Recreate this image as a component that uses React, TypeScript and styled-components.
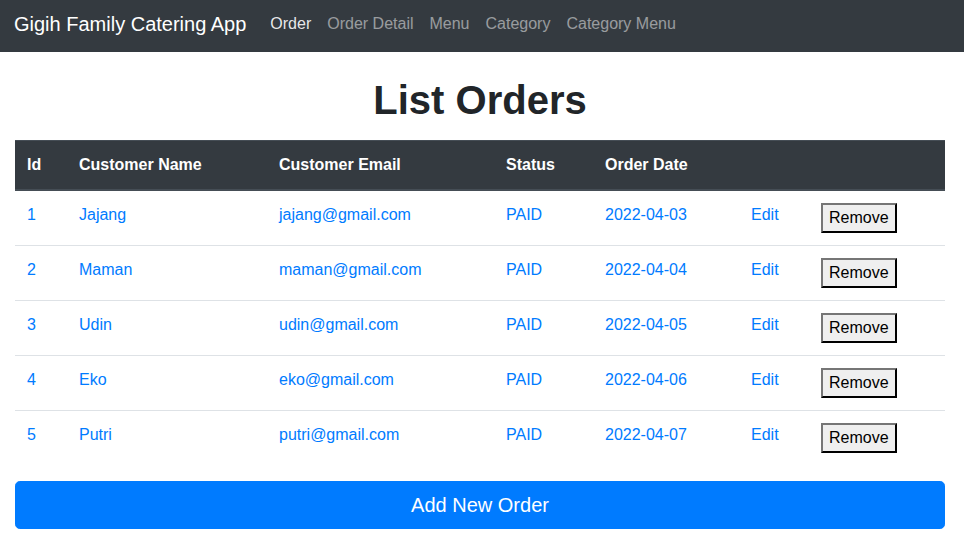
import React from "react";
import styled, { createGlobalStyle } from "styled-components";

const GlobalStyle = createGlobalStyle`
  html, body { margin: 0; padding: 0; background: #fff; }
  body {
    font-family: "Liberation Sans", Arial, sans-serif;
    font-size: 16px;
    line-height: 1.5;
    color: #212529;
  }
  * { box-sizing: border-box; }
`;

const Navbar = styled.nav`
  display: flex;
  align-items: center;
  height: 52px;
  padding: 0 16px 4px 14px;
  background: #343a40;
`;

const Brand = styled.a`
  font-size: 20px;
  line-height: 30px;
  color: #fff;
  margin-right: 16px;
  text-decoration: none;
`;

const NavList = styled.div`
  display: flex;
`;

const NavLink = styled.a<{ $active?: boolean }>`
  padding: 8px;
  font-size: 16px;
  line-height: 24px;
  color: ${(p) => (p.$active ? "rgba(255,255,255,0.9)" : "rgba(255,255,255,0.5)")};
  text-decoration: none;
`;

const Container = styled.main`
  width: 930px;
  margin-left: 15px;
`;

const Title = styled.h1`
  margin: 24px 0 16px;
  text-align: center;
  font-size: 40px;
  font-weight: 700;
  line-height: 48px;
`;

const Table = styled.table`
  width: 100%;
  table-layout: fixed;
  border-collapse: collapse;
  margin-bottom: 16px;
`;

const Th = styled.th`
  padding: 12px;
  text-align: left;
  vertical-align: bottom;
  background: #343a40;
  color: #fff;
  font-weight: 700;
  border-top: 1px solid #454d55;
  border-bottom: 2px solid #454d55;
  line-height: 24px;
`;

const Td = styled.td`
  padding: 12px;
  vertical-align: top;
  border-top: 1px solid #dee2e6;
  line-height: 24px;
`;

const Link = styled.a`
  color: #007bff;
  text-decoration: none;
`;

const RemoveButton = styled.button`
  font-family: inherit;
  font-size: 16px;
  line-height: 24px;
  padding: 1px 6px;
  background: #efefef;
  color: #000;
  border: 2px outset #767676;
  border-color: #767676 #333 #333 #767676;
  border-radius: 0;
`;

const AddButton = styled.button`
  display: block;
  width: 100%;
  padding: 8px 16px;
  font-family: inherit;
  font-size: 20px;
  line-height: 30px;
  color: #fff;
  background: #007bff;
  border: 1px solid #007bff;
  border-radius: 4.8px;
`;

const orders = [
  { id: 1, name: "Jajang", email: "jajang@gmail.com", date: "2022-04-03" },
  { id: 2, name: "Maman", email: "maman@gmail.com", date: "2022-04-04" },
  { id: 3, name: "Udin", email: "udin@gmail.com", date: "2022-04-05" },
  { id: 4, name: "Eko", email: "eko@gmail.com", date: "2022-04-06" },
  { id: 5, name: "Putri", email: "putri@gmail.com", date: "2022-04-07" },
];

const widths = [52, 200, 227, 99, 146, 70, 136];

export default function App() {
  return (
    <>
      <GlobalStyle />
      <Navbar>
        <Brand href="#">Gigih Family Catering App</Brand>
        <NavList>
          <NavLink $active href="#">Order</NavLink>
          <NavLink href="#">Order Detail</NavLink>
          <NavLink href="#">Menu</NavLink>
          <NavLink href="#">Category</NavLink>
          <NavLink href="#">Category Menu</NavLink>
        </NavList>
      </Navbar>
      <Container>
        <Title>List Orders</Title>
        <Table>
          <colgroup>
            {widths.map((w, i) => (
              <col key={i} style={{ width: w }} />
            ))}
          </colgroup>
          <thead>
            <tr>
              <Th>Id</Th>
              <Th>Customer Name</Th>
              <Th>Customer Email</Th>
              <Th>Status</Th>
              <Th>Order Date</Th>
              <Th></Th>
              <Th></Th>
            </tr>
          </thead>
          <tbody>
            {orders.map((o) => (
              <tr key={o.id}>
                <Td><Link href="#">{o.id}</Link></Td>
                <Td><Link href="#">{o.name}</Link></Td>
                <Td><Link href="#">{o.email}</Link></Td>
                <Td><Link href="#">PAID</Link></Td>
                <Td><Link href="#">{o.date}</Link></Td>
                <Td><Link href="#">Edit</Link></Td>
                <Td><RemoveButton>Remove</RemoveButton></Td>
              </tr>
            ))}
          </tbody>
        </Table>
        <AddButton>Add New Order</AddButton>
      </Container>
    </>
  );
}
